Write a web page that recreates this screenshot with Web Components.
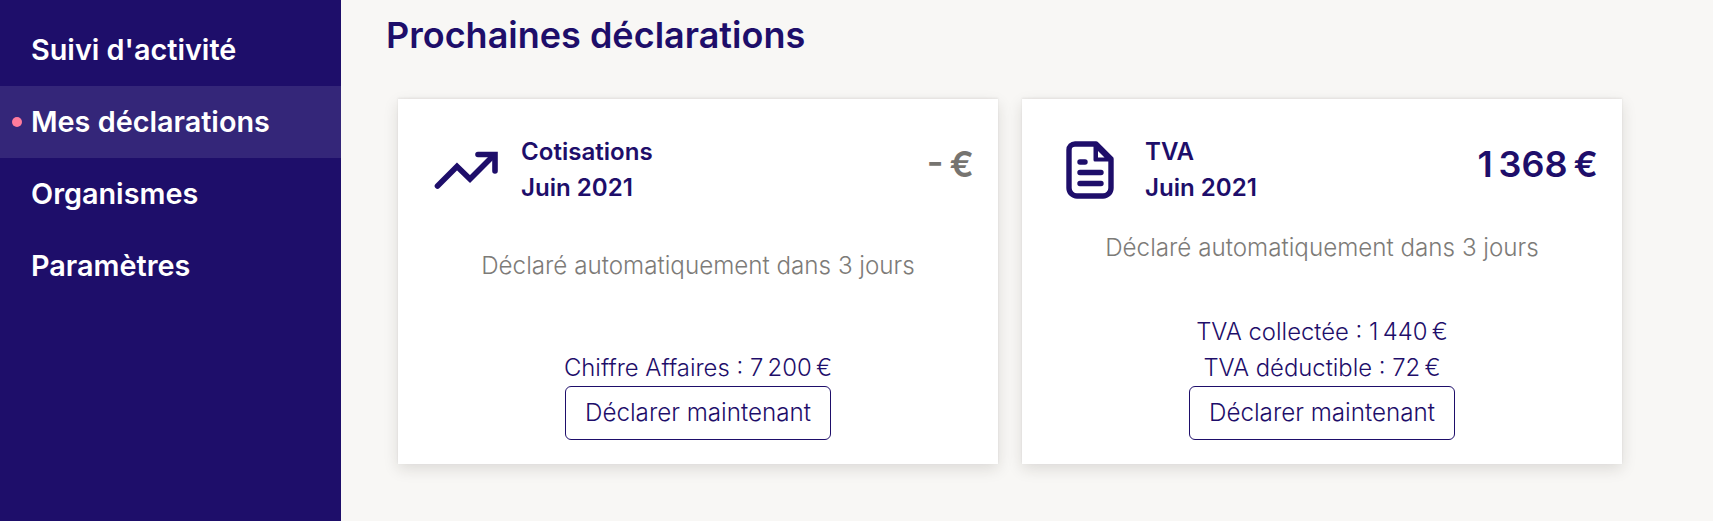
<!DOCTYPE html>
<html lang="fr">
<head>
<meta charset="utf-8">
<title>Prochaines déclarations</title>
<style>
html,body{margin:0;padding:0;height:100%;overflow:hidden}
body{font-family:Inter,"Liberation Sans",sans-serif;background:#f8f7f5}
</style>
</head>
<body>
<app-shell>
  <side-nav slot="nav">
    <nav-item>Suivi d'activité</nav-item>
    <nav-item active>Mes déclarations</nav-item>
    <nav-item>Organismes</nav-item>
    <nav-item>Paramètres</nav-item>
  </side-nav>
  <page-section heading="Prochaines déclarations">
    <decl-card title-text="Cotisations" period="Juin 2021" amount="-&#8239;€" muted>
      <svg slot="icon" width="64" height="40" viewBox="0 0 64 40" fill="none" stroke="#1e0e6a" stroke-width="5.6" stroke-linecap="round" stroke-linejoin="miter"><path d="M3.5 36 L23 16.5 L36 29 L60 5"/><path d="M44 4.5 H61 V21"/></svg>
      <detail-line>Chiffre Affaires : 7&#8239;200&#8239;€</detail-line>
    </decl-card>
    <decl-card title-text="TVA" period="Juin 2021" amount="1&#8239;368&#8239;€">
      <svg slot="icon" width="48" height="58" viewBox="0 0 48 58" fill="none" stroke="#1e0e6a"><path d="M9 3 H30 L45 18 V47 A8 8 0 0 1 37 55 H11 A8 8 0 0 1 3 47 V9 A6 6 0 0 1 9 3 Z" stroke-width="5.4" stroke-linejoin="round"/><path d="M29 3 V19 H45 Z" fill="#1e0e6a" stroke="#1e0e6a" stroke-width="3" stroke-linejoin="round"/><path d="M32 10 L32 16.5 H38.5 Z" fill="#fff" stroke="none"/><path d="M14 21 H19 M14 31.5 H35 M14 42.5 H35" stroke-width="5.4" stroke-linecap="round"/></svg>
      <detail-line>TVA collectée : 1&#8239;440&#8239;€</detail-line>
      <detail-line>TVA déductible : 72&#8239;€</detail-line>
    </decl-card>
  </page-section>
</app-shell>
<script>
function shadow(el, html){ const r = el.attachShadow({mode:'open'}); r.innerHTML = html; return r; }
function esc(s){ return String(s).replace(/&/g,'&amp;').replace(/</g,'&lt;'); }

customElements.define('app-shell', class extends HTMLElement {
  constructor(){ super(); shadow(this, `<style>
    :host{display:flex;height:100vh;min-height:521px;background:#f8f7f5}
    main{flex:1;min-width:0}
  </style><slot name="nav"></slot><main><slot></slot></main>`); }
});

customElements.define('side-nav', class extends HTMLElement {
  constructor(){ super(); shadow(this, `<style>
    :host{display:flex;flex-direction:column;flex:none;width:341px;padding-top:14px;box-sizing:border-box;background:#1e0e6a}
  </style><slot></slot>`); }
});

customElements.define('nav-item', class extends HTMLElement {
  constructor(){ super(); shadow(this, `<style>
    :host{display:flex;align-items:center;height:72px;padding-left:31px;color:#fff;font:600 28.8px/1 Inter,"Liberation Sans",sans-serif;position:relative}
    :host([active]){background:rgba(255,255,255,.1)}
    :host([active])::before{content:"";position:absolute;left:12px;top:31px;width:10px;height:10px;border-radius:50%;background:#ff7b9c}
  </style><slot></slot>`); }
});

customElements.define('page-section', class extends HTMLElement {
  constructor(){ super(); shadow(this, `<style>
    :host{display:block;padding:0 0 0 45px}
    h1{margin:0;height:70px;display:flex;align-items:center;color:#1e0e6a;font:600 36px/1 Inter,"Liberation Sans",sans-serif}
    .cards{display:flex;gap:24px;margin:29px 0 0 12px}
  </style><h1>${esc(this.getAttribute('heading')||'')}</h1><div class="cards"><slot></slot></div>`); }
});

customElements.define('decl-card', class extends HTMLElement {
  constructor(){ super();
    const t=esc(this.getAttribute('title-text')||''), p=esc(this.getAttribute('period')||''), a=esc(this.getAttribute('amount')||'');
    shadow(this, `<style>
    :host{display:flex;flex-direction:column;box-sizing:border-box;width:600px;height:365px;padding:35px 27px 24px;background:#fff;box-shadow:0 5px 14px rgba(40,30,20,.13),0 -1px 2px rgba(40,30,20,.08);font-family:Inter,"Liberation Sans",sans-serif;color:#1e0e6a;font-feature-settings:"calt" 0}
    header{display:flex;align-items:flex-start;height:72px;margin-right:-3px}
    .icon{flex:none;width:81px;height:72px;display:flex;align-items:center;justify-content:center;margin-right:15px}
    .titles{flex:1;font:600 24.1px/36px Inter,"Liberation Sans",sans-serif}
    .amount{font:600 36px/60px Inter,"Liberation Sans",sans-serif}
    :host([muted]) .amount{color:#767470}
    .desc{flex:1;display:flex;align-items:center;justify-content:center;padding-bottom:24px;color:#7d7b78;font:300 24.2px/36px Inter,"Liberation Sans",sans-serif}
    footer{display:flex;flex-direction:column;align-items:center;font:300 24.2px/36px Inter,"Liberation Sans",sans-serif}
    </style>
    <header>
      <div class="icon"><slot name="icon"></slot></div>
      <div class="titles"><div>${t}</div><div>${p}</div></div>
      <div class="amount">${a}</div>
    </header>
    <div class="desc">Déclaré automatiquement dans 3 jours</div>
    <footer><slot></slot><action-button>Déclarer maintenant</action-button></footer>`); }
});

customElements.define('detail-line', class extends HTMLElement {
  constructor(){ super(); shadow(this, `<style>:host{display:block;height:36px;text-align:center;font-size:23.85px}</style><slot></slot>`); }
});

customElements.define('action-button', class extends HTMLElement {
  constructor(){ super(); shadow(this, `<style>
    :host{display:flex;align-items:center;justify-content:center;box-sizing:border-box;width:266px;height:54px;border:1px solid #1e0e6a;border-radius:6px;color:#1e0e6a;background:#fff}
  </style><slot></slot>`); }
});
</script>
</body>
</html>
